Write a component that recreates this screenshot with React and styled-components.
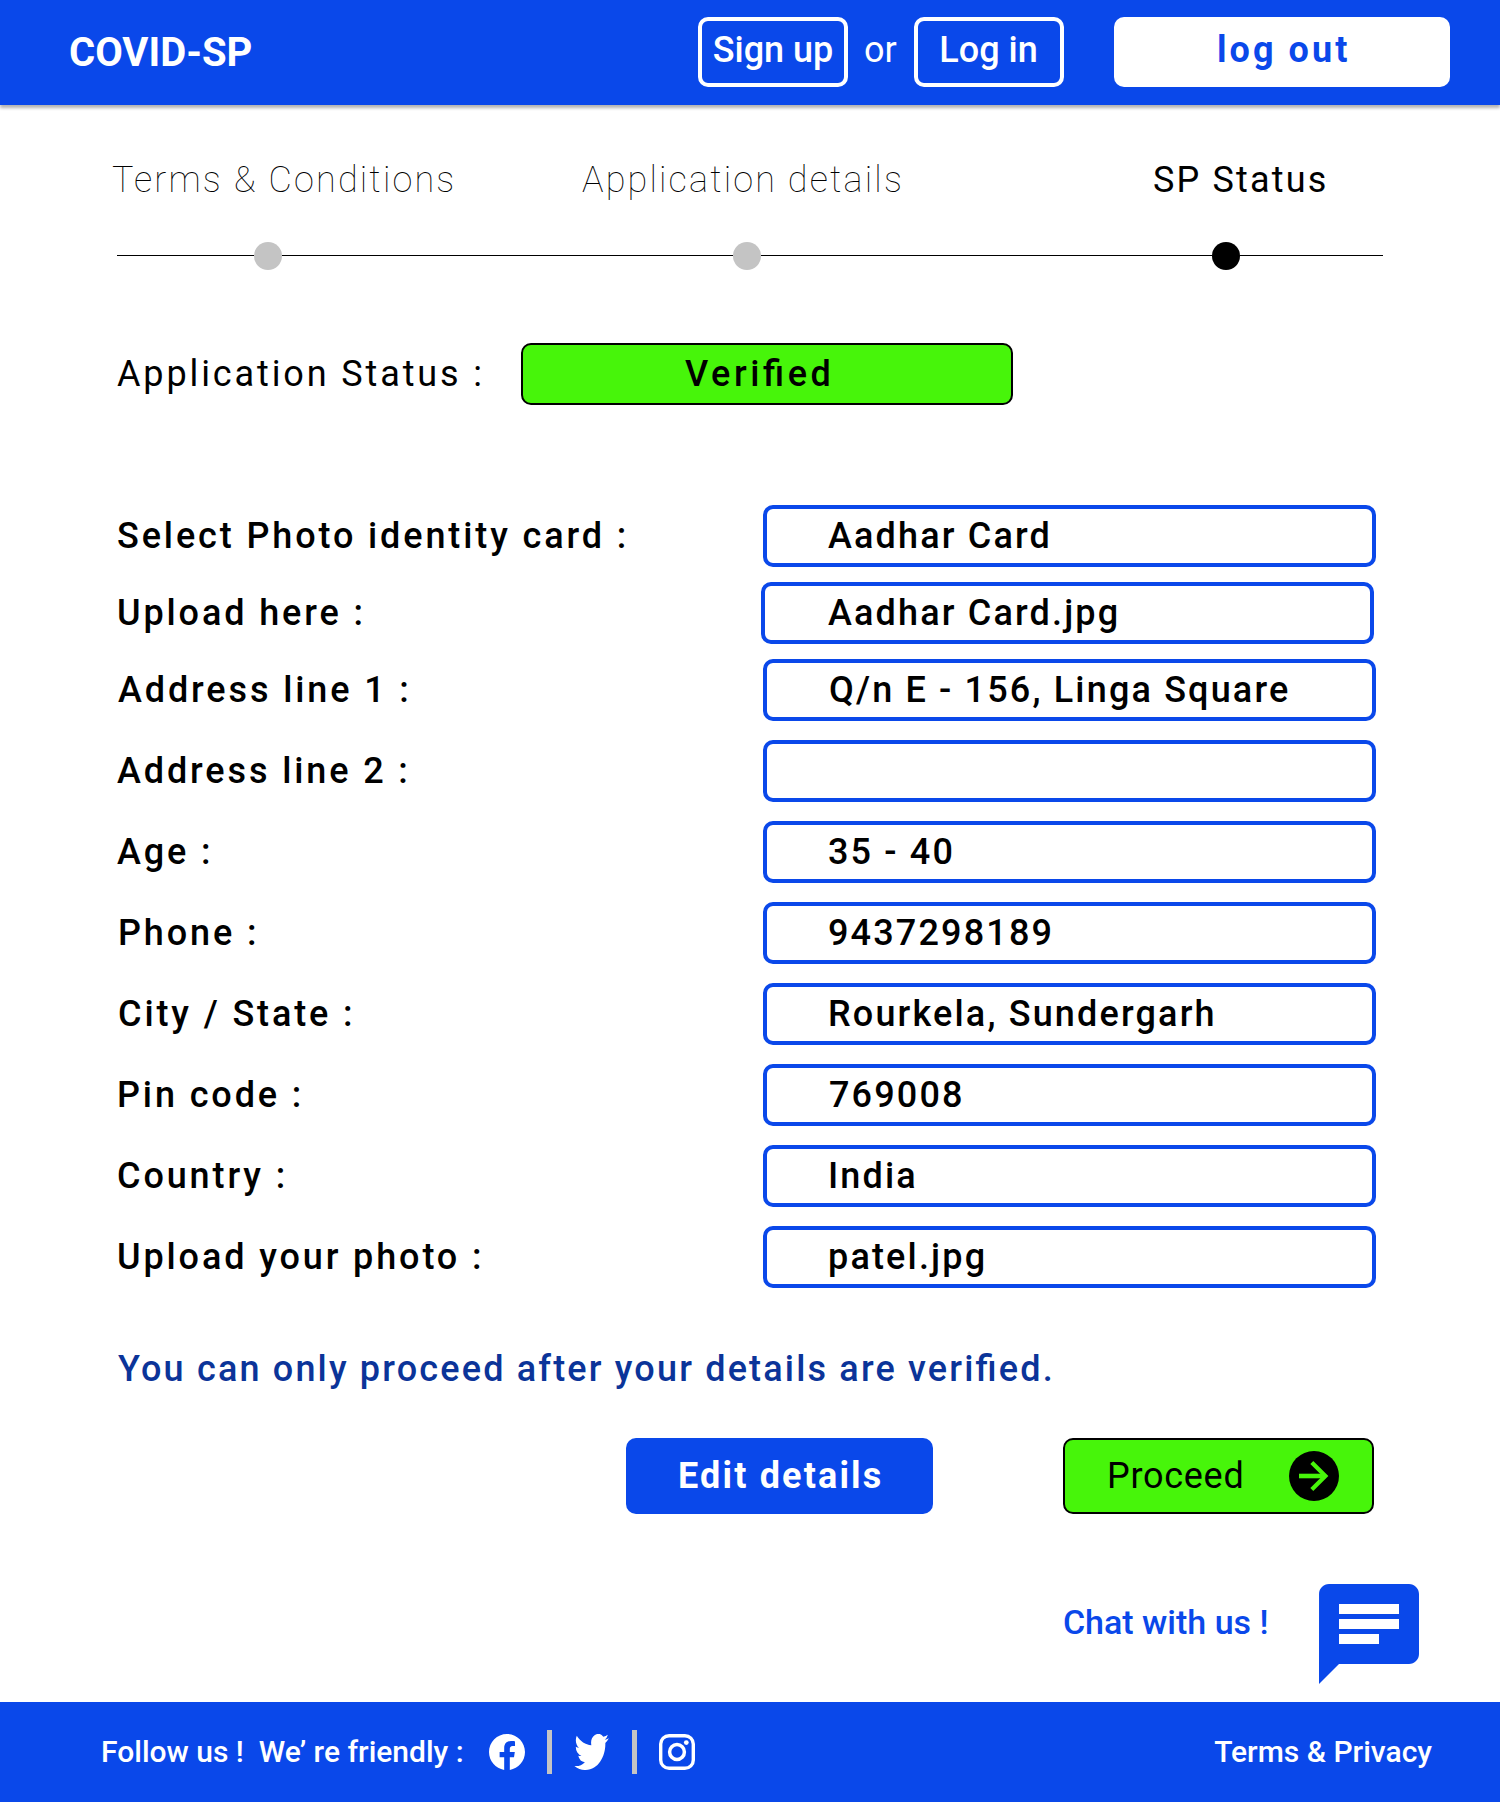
import React from "react";
import styled, { createGlobalStyle, css } from "styled-components";

const blue = "#0A48EA";
const green = "#47F50A";
const grey = "#C4C4C4";

const GlobalStyle = createGlobalStyle`
  *, *::before, *::after { box-sizing: border-box; }
  body {
    margin: 0;
    background: #fff;
    color: #000;
    font-family: Roboto, "Liberation Sans", sans-serif;
  }
  button {
    margin: 0;
    font-family: inherit;
    cursor: pointer;
  }
`;

const Page = styled.div`
  display: flex;
  flex-direction: column;
  width: 1500px;
  height: 1802px;
  background: #fff;
`;

const Header = styled.header`
  display: flex;
  align-items: center;
  flex: none;
  height: 105px;
  padding: 0 50px 0 69px;
  background: ${blue};
  color: #fff;
  box-shadow: 0 3px 3px rgba(0, 0, 0, 0.3);
`;

const Brand = styled.div`
  flex: 1;
  font-size: 40px;
  font-weight: 700;
`;

const AccountNav = styled.nav`
  display: flex;
  height: 70px;
  margin-top: -1px;
`;

const headerText = css`
  display: flex;
  align-items: center;
  font-size: 36px;
  line-height: 42px;
  padding-bottom: 4px;
`;

const OutlineButton = styled.button`
  ${headerText}
  justify-content: center;
  width: 150px;
  border: 4px solid #fff;
  border-radius: 10px;
  padding: 0 ${(p) => p.$nudge || 0}px 4px 0;
  background: transparent;
  color: #fff;
  font-weight: 500;
`;

const Or = styled.span`
  ${headerText}
  width: 66px;
  padding-left: 16px;
  font-weight: 400;
`;

const LogoutButton = styled.button`
  ${headerText}
  width: 336px;
  margin-left: 50px;
  border: 0;
  border-radius: 10px;
  padding: 0 0 4px 103px;
  background: #fff;
  color: ${blue};
  font-weight: 700;
  letter-spacing: 0.085em;
`;

const Main = styled.main`
  display: flex;
  flex-direction: column;
  flex: 1;
  padding-top: 54px;
`;

const Steps = styled.ol`
  display: grid;
  grid-template-columns: 470px 571px auto;
  margin: 0;
  padding: 0 0 0 112px;
  list-style: none;
`;

const Step = styled.li`
  font-size: 36px;
  line-height: 42px;
  font-weight: ${(p) => (p.$active ? 400 : 100)};
  letter-spacing: 0.06em;
  white-space: nowrap;
`;

const Rail = styled.div`
  display: flex;
  align-items: flex-start;
  margin: 41px 117px 0;
`;

const Track = styled.span`
  flex: ${(p) => p.$span} 0 0;
  height: 1px;
  margin-top: 13px;
  background: #000;
`;

const Dot = styled.span`
  flex: none;
  width: 28px;
  height: 28px;
  border-radius: 50%;
  background: ${(p) => (p.$active ? "#000" : grey)};
`;

const StatusRow = styled.div`
  display: flex;
  align-items: center;
  height: 62px;
  margin: 73px 0 0 117px;
`;

const StatusLabel = styled.span`
  width: 404px;
  font-size: 36px;
  line-height: 42px;
  letter-spacing: 0.08em;
  white-space: nowrap;
`;

const StatusBadge = styled.span`
  display: flex;
  align-items: center;
  width: 492px;
  height: 62px;
  padding-left: 162px;
  border: 2px solid #000;
  border-radius: 10px;
  background: ${green};
  font-size: 36px;
  line-height: 42px;
  font-weight: 500;
  letter-spacing: 0.1em;
  font-feature-settings: "liga" 1;
`;

const Form = styled.div`
  display: flex;
  flex-direction: column;
  gap: 19px;
  margin-top: 100px;
`;

const TightGroup = styled.div`
  display: flex;
  flex-direction: column;
  gap: 15px;
`;

const Row = styled.div`
  display: flex;
  align-items: center;
  height: 62px;
`;

const Label = styled.span`
  width: ${(p) => (p.$shift ? 761 : 763)}px;
  padding-left: ${(p) => 117 + (p.$indent || 0)}px;
  font-size: 36px;
  line-height: 42px;
  font-weight: 500;
  letter-spacing: 0.08em;
  white-space: nowrap;
`;

const Value = styled.span`
  display: flex;
  align-items: center;
  width: 613px;
  height: 62px;
  padding-left: ${(p) => 61 + (p.$shift ? 2 : 0) + (p.$indent || 0)}px;
  border: 4px solid ${blue};
  border-radius: 10px;
  font-size: 36px;
  line-height: 42px;
  font-weight: 500;
  letter-spacing: 0.06em;
  white-space: nowrap;
`;

const Notice = styled.p`
  margin: 60px 0 0 118px;
  color: #0B3499;
  font-size: 36px;
  line-height: 42px;
  font-weight: 500;
  letter-spacing: 0.0603em;
  font-feature-settings: "liga" 1;
`;

const Actions = styled.div`
  display: flex;
  justify-content: flex-end;
  gap: 130px;
  height: 76px;
  margin: 48px 126px 0 0;
`;

const ActionButton = styled.button`
  display: flex;
  align-items: center;
  height: 76px;
  border-radius: 10px;
  font-size: 36px;
  line-height: 42px;
`;

const EditButton = styled(ActionButton)`
  width: 307px;
  padding: 0 0 0 52px;
  border: 0;
  background: ${blue};
  color: #fff;
  font-weight: 700;
  letter-spacing: 0.06em;
`;

const ProceedButton = styled(ActionButton)`
  justify-content: space-between;
  width: 311px;
  padding: 0 33px 0 42px;
  border: 2px solid #000;
  background: ${green};
  color: #000;
  font-weight: 400;
  letter-spacing: 0.02em;
`;

const Chat = styled.div`
  display: flex;
  justify-content: flex-end;
  align-items: flex-start;
  gap: 50.5px;
  margin: 70px 81px 0 0;
  color: ${blue};
`;

const ChatText = styled.span`
  margin-top: 18px;
  font-size: 34px;
  line-height: 40px;
  font-weight: 500;
`;

const Footer = styled.footer`
  display: flex;
  align-items: center;
  flex: none;
  height: 100px;
  padding: 0 68px 0 101px;
  background: ${blue};
  color: #fff;
  font-size: 30px;
  line-height: 36px;
  font-weight: 500;
`;

const FooterText = styled.span`
  white-space: pre;
`;

const Follow = styled(FooterText)`
  width: 388px;
`;

const Social = styled.div`
  display: flex;
  align-items: center;
  gap: 22px;
  flex: 1;
`;

const Divider = styled.span`
  width: 5px;
  height: 44px;
  background: ${grey};
`;

const Icon = styled.svg`
  display: block;
  flex: none;
`;

const ArrowCircle = () => (
  <Icon width="50" height="50" viewBox="0 0 50 50">
    <circle cx="25" cy="25" r="25" fill="#000" />
    <path d="M10 25H36" fill="none" stroke={green} strokeWidth="4.6" />
    <path d="M22.8 11.4L36.4 25L22.8 38.6" fill="none" stroke={green} strokeWidth="4.2" />
  </Icon>
);

const ChatIcon = () => (
  <Icon width="100" height="100" viewBox="2 2 20 20" fill="currentColor">
    <path d="M20 2H4c-1.1 0-1.99.9-1.99 2L2 22l4-4h14c1.1 0 2-.9 2-2V4c0-1.1-.9-2-2-2zM6 9h12v2H6V9zm8 5H6v-2h8v2zm4-6H6V6h12v2z" />
  </Icon>
);

const Facebook = () => (
  <Icon width="36" height="36" viewBox="2 2 20 20" fill="currentColor">
    <path d="M22 12.06C22 6.505 17.523 2 12 2S2 6.505 2 12.06c0 5.022 3.657 9.184 8.438 9.94v-7.03H7.898v-2.91h2.54V9.845c0-2.522 1.492-3.915 3.777-3.915 1.094 0 2.238.197 2.238.197v2.476h-1.26c-1.243 0-1.63.775-1.63 1.57v1.887h2.773l-.443 2.91h-2.33V22C18.343 21.244 22 17.082 22 12.06z" />
  </Icon>
);

const Twitter = () => (
  <Icon width="36" height="36" viewBox="-0.3 2.25 25.1 19.5" preserveAspectRatio="none" fill="currentColor">
    <path d="M23.953 4.57a10 10 0 01-2.825.775 4.958 4.958 0 002.163-2.723c-.951.555-2.005.959-3.127 1.184a4.92 4.92 0 00-8.384 4.482C7.69 8.095 4.067 6.13 1.64 3.162a4.822 4.822 0 00-.666 2.475c0 1.71.87 3.213 2.188 4.096a4.904 4.904 0 01-2.228-.616v.06a4.923 4.923 0 003.946 4.827 4.996 4.996 0 01-2.212.085 4.936 4.936 0 004.604 3.417 9.867 9.867 0 01-6.102 2.105c-.39 0-.779-.023-1.17-.067a13.995 13.995 0 007.557 2.209c9.053 0 13.998-7.496 13.998-13.985 0-.21 0-.42-.015-.63A9.935 9.935 0 0024 4.59z" />
  </Icon>
);

const Instagram = () => (
  <Icon width="36" height="36" viewBox="0 0 36 36" fill="none" stroke="currentColor">
    <rect x="1.7" y="1.7" width="32.6" height="32.6" rx="8.4" strokeWidth="3.4" />
    <circle cx="18" cy="18" r="7.4" strokeWidth="3.5" />
    <circle cx="27.3" cy="8.6" r="2.4" fill="currentColor" stroke="none" />
  </Icon>
);

const identityFields = [
  { label: "Select Photo identity card :", value: "Aadhar Card" },
  { label: "Upload here :", value: "Aadhar Card.jpg", shift: true },
  { label: "Address line 1 :", value: "Q/n E - 156, Linga Square", labelIndent: 1, valueIndent: 1 },
];

const personalFields = [
  { label: "Address line 2 :", value: "" },
  { label: "Age :", value: "35 - 40" },
  { label: "Phone :", value: "9437298189", labelIndent: 1 },
  { label: "City / State :", value: "Rourkela, Sundergarh", labelIndent: 1 },
  { label: "Pin code :", value: "769008", valueIndent: 1 },
  { label: "Country :", value: "India" },
  { label: "Upload your photo :", value: "patel.jpg" },
];

const Field = ({ label, value, shift, labelIndent, valueIndent }) => (
  <Row>
    <Label $shift={shift} $indent={labelIndent}>{label}</Label>
    <Value $shift={shift} $indent={valueIndent}>{value}</Value>
  </Row>
);

export default function App() {
  return (
    <Page>
      <GlobalStyle />
      <Header>
        <Brand>COVID-SP</Brand>
        <AccountNav>
          <OutlineButton>Sign up</OutlineButton>
          <Or>or</Or>
          <OutlineButton $nudge={1}>Log in</OutlineButton>
          <LogoutButton>log out</LogoutButton>
        </AccountNav>
      </Header>
      <Main>
        <Steps>
          <Step>Terms &amp; Conditions</Step>
          <Step>Application details</Step>
          <Step $active>SP Status</Step>
        </Steps>
        <Rail>
          <Track $span={137} />
          <Dot />
          <Track $span={451} />
          <Dot />
          <Track $span={451} />
          <Dot $active />
          <Track $span={143} />
        </Rail>
        <StatusRow>
          <StatusLabel>Application Status :</StatusLabel>
          <StatusBadge>Verified</StatusBadge>
        </StatusRow>
        <Form>
          <TightGroup>
            {identityFields.map((f) => <Field key={f.label} {...f} />)}
          </TightGroup>
          {personalFields.map((f) => <Field key={f.label} {...f} />)}
        </Form>
        <Notice>You can only proceed after your details are verified.</Notice>
        <Actions>
          <EditButton>Edit details</EditButton>
          <ProceedButton>
            Proceed
            <ArrowCircle />
          </ProceedButton>
        </Actions>
        <Chat>
          <ChatText>Chat with us !</ChatText>
          <ChatIcon />
        </Chat>
      </Main>
      <Footer>
        <Follow>{"Follow us !  We’ re friendly :"}</Follow>
        <Social>
          <Facebook />
          <Divider />
          <Twitter />
          <Divider />
          <Instagram />
        </Social>
        <FooterText>Terms &amp; Privacy</FooterText>
      </Footer>
    </Page>
  );
}
